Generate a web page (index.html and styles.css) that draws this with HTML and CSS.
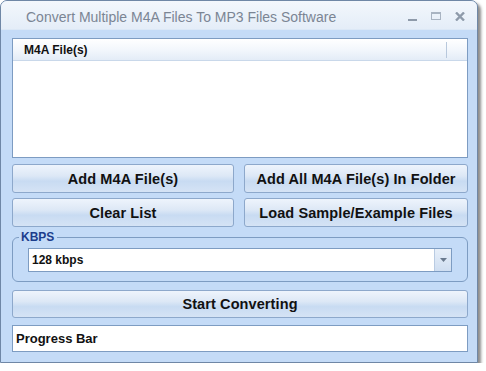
FILE: index.html
```html
<!DOCTYPE html>
<html>
<head>
<meta charset="utf-8">
<link rel="stylesheet" href="styles.css">
</head>
<body>
<div class="window">
  <div class="titlebar">
    <span class="title">Convert Multiple M4A Files To MP3 Files Software</span>
    <div class="controls">
      <span class="ctl ctl-min"></span>
      <span class="ctl ctl-max"></span>
      <svg class="ctl-close" width="10" height="9" viewBox="0 0 10 9"><path d="M1 0.5 L9 8.5 M9 0.5 L1 8.5" stroke="#8e9aaa" stroke-width="2.4"/></svg>
    </div>
  </div>
  <div class="client">
    <div class="listbox">
      <div class="listhead"><span class="colname">M4A File(s)</span><span class="colsep"></span></div>
    </div>
    <div class="btngrid">
      <button class="btn">Add M4A File(s)</button>
      <button class="btn">Add All M4A File(s) In Folder</button>
      <button class="btn">Clear List</button>
      <button class="btn">Load Sample/Example Files</button>
    </div>
    <fieldset class="group">
      <legend class="legend">KBPS</legend>
      <div class="combo">
        <span class="combotext">128 kbps</span>
        <span class="dropbtn"><svg width="7" height="4" viewBox="0 0 7 4"><path d="M0 0 H7 L3.5 4 Z" fill="#6a7a8e"/></svg></span>
      </div>
    </fieldset>
    <button class="btn btn-wide">Start Converting</button>
    <div class="progress">Progress Bar</div>
  </div>
</div>
</body>
</html>
```

FILE: styles.css
```css
html, body {
  margin: 0;
  padding: 0;
  background: #ffffff;
}
body {
  font-family: "Liberation Sans", Arial, sans-serif;
}
.window {
  width: 476px;
  height: 361px;
  border: 1px solid #6f87a6;
  border-radius: 7px 7px 0 0;
  box-shadow: 3px 3px 3px rgba(0,0,0,0.45);
  background: #c4dbf7;
  display: flex;
  flex-direction: column;
  overflow: hidden;
}
.titlebar {
  height: 28px;
  flex: none;
  display: flex;
  align-items: center;
  background: linear-gradient(#f3f7fc, #e4edf8);
  border-bottom: 1px solid #dce8f6;
  padding-left: 25px;
  padding-right: 12px;
}
.title {
  font-family: "Liberation Sans", Arial, sans-serif;
  font-size: 14px;
  color: #7b8594;
  flex: 1;
  padding-top: 3px;
}
.controls {
  display: flex;
  align-items: center;
  gap: 14px;
  padding-top: 2px;
}
.ctl {
  display: inline-block;
}
.ctl-min {
  width: 9px;
  height: 2px;
  background: #8e9aaa;
  margin-top: 8px;
}
.ctl-max {
  width: 8px;
  height: 5px;
  border: 1px solid #a9b4c2;
  border-top: 2px solid #a9b4c2;
}
.ctl-close {
  display: block;
}
.client {
  flex: 1;
  padding: 8px 9px 0 11px;
  display: flex;
  flex-direction: column;
}
.listbox {
  height: 118px;
  background: #ffffff;
  border: 1px solid #7d9cc2;
  flex: none;
}
.listhead {
  height: 21px;
  display: flex;
  align-items: center;
  background: linear-gradient(#ffffff, #f3f7fc 50%, #e3ecf7);
  border-bottom: 1px solid #c9d8ea;
}
.colname {
  font-size: 12px;
  font-weight: bold;
  color: #111;
  padding-left: 11px;
  flex: 1;
}
.colsep {
  width: 1px;
  height: 16px;
  background: #b8c8dc;
  margin-right: 20px;
}
.btngrid {
  margin-top: 6px;
  display: grid;
  grid-template-columns: 222px 1fr;
  column-gap: 10px;
  row-gap: 5px;
}
.btn {
  height: 29px;
  font-family: "Liberation Sans", Arial, sans-serif;
  font-size: 14.5px;
  letter-spacing: 0.1px;
  font-weight: bold;
  color: #111;
  border: 1px solid #8da8cb;
  border-radius: 3px;
  background: linear-gradient(#eef4fc 0%, #dde8f6 40%, #c8dbf2 60%, #d5e3f5 100%);
  padding: 0;
}
.group {
  margin: 5px 0 0 0;
  padding: 6px 15px 9px 15px;
  border: 1px solid #7d9cc2;
  border-radius: 6px;
  min-width: 0;
}
.legend {
  font-size: 12px;
  font-weight: bold;
  color: #1c3d8c;
  padding: 0 3px 0 2px;
  margin-left: -9px;
  line-height: 10px;
}
.combo {
  height: 24px;
  box-sizing: border-box;
  background: #ffffff;
  border: 1px solid #7d9cc2;
  display: flex;
  align-items: center;
}
.combotext {
  flex: 1;
  font-size: 12px;
  font-weight: bold;
  color: #111;
  padding-left: 3px;
}
.dropbtn {
  width: 16px;
  height: 22px;
  display: flex;
  align-items: center;
  justify-content: center;
  background: linear-gradient(#e7eff9, #cfdef1);
  border-left: 1px solid #b9cbe2;
}
.btn-wide {
  margin-top: 8px;
  height: 28px;
}
.progress {
  margin-top: 7px;
  height: 27px;
  box-sizing: border-box;
  background: #ffffff;
  border: 1px solid #7d9cc2;
  display: flex;
  align-items: center;
  padding-left: 3px;
  font-size: 13px;
  font-weight: bold;
  color: #111;
}
```
